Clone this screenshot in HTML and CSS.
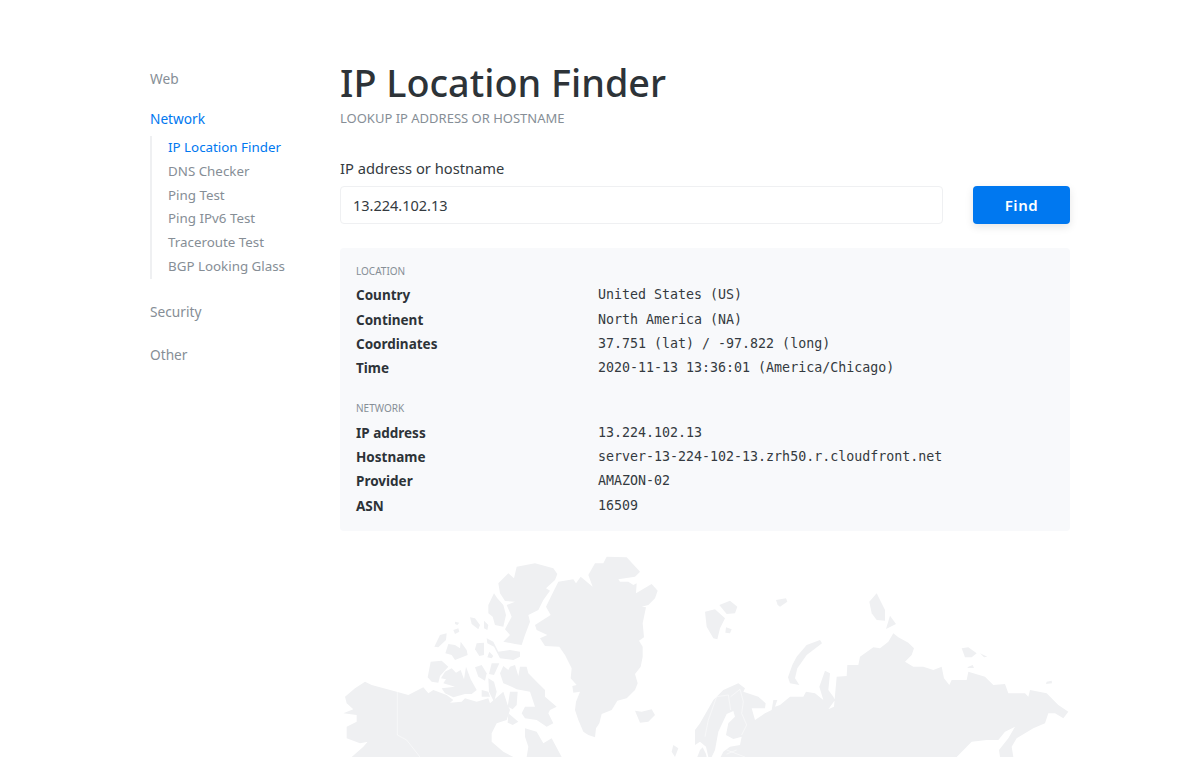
FILE: index.html
```html
<!DOCTYPE html>
<html lang="en">
<head>
<meta charset="utf-8">
<title>IP Location Finder</title>
<link rel="stylesheet" href="styles.css">
</head>
<body>
<div class="layout">
  <nav class="sidebar">
    <a class="nav-top" href="#">Web</a>
    <a class="nav-top active" href="#">Network</a>
    <ul class="subnav">
      <li><a class="active" href="#">IP Location Finder</a></li>
      <li><a href="#">DNS Checker</a></li>
      <li><a href="#">Ping Test</a></li>
      <li><a href="#">Ping IPv6 Test</a></li>
      <li><a href="#">Traceroute Test</a></li>
      <li><a href="#">BGP Looking Glass</a></li>
    </ul>
    <a class="nav-top" href="#">Security</a>
    <a class="nav-top" href="#">Other</a>
  </nav>
  <main class="content">
    <h1 class="title">IP Location Finder</h1>
    <p class="subtitle">Lookup IP address or hostname</p>
    <label class="field-label" for="host">IP address or hostname</label>
    <div class="form-row">
      <input class="field" id="host" type="text" value="13.224.102.13">
      <button class="find" type="button">Find</button>
    </div>
    <section class="results">
      <h2 class="group-title">Location</h2>
      <dl class="rows">
        <dt>Country</dt><dd>United States (US)</dd>
        <dt>Continent</dt><dd>North America (NA)</dd>
        <dt>Coordinates</dt><dd>37.751 (lat) / -97.822 (long)</dd>
        <dt>Time</dt><dd>2020-11-13 13:36:01 (America/Chicago)</dd>
      </dl>
      <h2 class="group-title second">Network</h2>
      <dl class="rows">
        <dt>IP address</dt><dd>13.224.102.13</dd>
        <dt>Hostname</dt><dd>server-13-224-102-13.zrh50.r.cloudfront.net</dd>
        <dt>Provider</dt><dd>AMAZON-02</dd>
        <dt>ASN</dt><dd>16509</dd>
      </dl>
    </section>
    <svg class="map" viewBox="0 0 2190 621" aria-hidden="true">
      <g class="land">
        <path d="M745,75 L765,40 L790,40 L800,20 L860,22 L900,65 L885,80 L835,88 L840,95 L865,95 L880,105 L890,100 L888,130 L935,102 L953,122 L945,145 L925,165 L905,170 L918,172 L908,220 L912,262 L897,272 L908,290 L908,320 L902,350 L885,372 L893,400 L885,420 L860,445 L832,452 L815,480 L785,492 L778,520 L768,535 L765,562 L745,555 L730,545 L715,510 L705,480 L708,455 L720,425 L700,428 L697,408 L710,405 L692,385 L695,355 L675,315 L658,290 L615,288 L600,265 L622,255 L590,240 L585,225 L632,195 L618,170 L640,125 L655,95 L700,88 L708,100 L722,80 L758,110 Z"/>
        <path d="M475,100 L505,70 L522,85 L530,50 L585,40 L640,55 L652,72 L645,90 L618,115 L630,122 L610,150 L595,180 L565,195 L570,215 L555,255 L545,285 L525,282 L490,275 L510,255 L495,238 L515,200 L500,165 L525,155 L495,153 L480,130 Z"/>
        <path d="M445,165 L462,130 L472,145 L490,165 L498,195 L490,230 L465,225 L458,200 L445,190 Z"/>
        <path d="M390,202 L405,205 L420,225 L415,238 L395,222 Z"/>
        <path d="M432,212 L445,225 L442,240 L432,235 Z"/>
        <path d="M345,215 L358,218 L352,225 L345,222 Z"/>
        <path d="M340,240 L355,235 L358,245 L345,252 Z"/>
        <path d="M300,255 L320,250 L318,270 L295,292 L283,290 Z"/>
        <path d="M440,265 L460,275 L475,305 L510,300 L540,305 L540,320 L520,330 L480,325 L462,290 L442,280 Z"/>
        <path d="M325,282 L345,285 L360,295 L362,275 L380,300 L383,315 L345,330 L335,315 L316,310 Z"/>
        <path d="M410,280 L432,278 L432,315 L418,318 L405,298 Z"/>
        <path d="M448,305 L460,318 L455,325 L442,322 Z"/>
        <path d="M272,335 L305,332 L325,350 L300,378 L295,398 L275,395 L263,382 Z"/>
        <path d="M335,355 L348,368 L362,360 L372,388 L378,350 L392,388 L410,420 L395,432 L375,432 L340,442 L315,430 L305,415 L345,410 L310,400 L318,388 L303,385 L315,365 Z"/>
        <path d="M405,352 L425,345 L440,370 L435,392 L415,380 Z"/>
        <path d="M455,340 L478,340 L462,375 L447,372 Z"/>
        <path d="M445,385 L462,395 L470,425 L462,455 L447,425 Z"/>
        <path d="M425,420 L445,425 L450,440 L425,440 Z"/>
        <path d="M480,370 L490,348 L505,360 L510,350 L525,345 L535,378 L540,350 L560,350 L565,370 L590,395 L615,420 L615,440 L650,470 L630,480 L625,490 L640,520 L620,530 L590,510 L555,505 L545,490 L555,470 L585,470 L570,425 L530,418 L515,410 L490,400 Z"/>
        <path d="M510,425 L533,425 L530,465 L518,478 L503,470 Z"/>
        <path d="M505,490 L535,515 L518,525 L503,518 Z"/>
        <path d="M15,440 L45,415 L75,395 L95,405 L170,425 L205,435 L250,412 L265,430 L280,420 L320,435 L340,450 L330,458 L365,455 L375,445 L410,455 L445,445 L450,460 L490,425 L503,465 L510,480 L500,510 L470,520 L455,550 L455,575 L490,605 L520,621 L560,621 L565,590 L555,560 L555,535 L590,545 L610,580 L635,565 L665,621 L35,621 L70,590 L105,550 L115,555 L130,550 L100,572 L60,580 L20,565 L20,530 L50,515 L50,495 L10,490 L40,478 L20,460 Z"/>
        <path d="M885,482 L905,485 L935,478 L945,495 L925,515 L900,518 Z"/>
        <path d="M1000,585 L1015,595 L1005,621 L995,605 Z"/>
      </g>
      <g class="land shift">
        <path d="M15,185 L45,178 L75,205 L60,235 L52,268 L40,265 L20,230 Z"/>
        <path d="M58,165 L90,152 L112,170 L105,190 L80,192 Z"/>
        <path d="M78,232 L95,238 L90,250 L76,248 Z"/>
        <path d="M228,150 L258,145 L262,155 L240,170 L233,165 Z"/>
        <path d="M508,155 L530,130 L555,180 L555,212 L530,210 L515,190 Z"/>
        <path d="M570,197 L588,222 L558,237 Z"/>
        <path d="M290,320 L320,285 L360,270 L366,280 L320,315 L292,355 L285,385 L298,405 L270,400 L264,382 L277,345 Z"/>
        <path d="M785,295 L805,292 L830,310 L815,322 L795,322 Z"/>
        <path d="M840,310 L862,320 L852,322 Z"/>
        <path d="M805,350 L818,345 L822,354 L802,354 Z"/>
        <path d="M1040,395 L1055,392 L1056,400 L1038,402 Z"/>
        <path d="M-15,585 L-15,540 L0,520 L40,450 L70,420 L115,400 L135,415 L130,425 L175,440 L197,460 L195,475 L155,475 L165,510 L195,490 L215,480 L220,450 L232,450 L225,470 L240,465 L270,440 L310,440 L318,425 L345,430 L370,450 L358,410 L375,362 L390,370 L385,420 L400,440 L405,450 L385,478 L402,470 L410,380 L440,378 L442,345 L475,345 L480,320 L520,292 L540,295 L565,275 L580,250 L595,262 L625,278 L642,295 L635,315 L615,335 L640,350 L670,350 L700,360 L725,350 L732,385 L748,405 L755,390 L800,390 L805,365 L855,380 L880,405 L915,402 L925,430 L975,430 L985,440 L990,420 L1040,430 L1075,465 L1105,485 L1090,505 L1065,490 L1045,490 L1035,520 L1000,535 L950,565 L935,590 L940,621 L900,621 L897,600 L925,565 L945,530 L915,545 L895,570 L860,570 L815,575 L770,621 L25,621 L18,590 L0,575 Z"/>
        <path d="M0,600 L8,592 L18,612 L20,621 L-8,621 Z"/>
        <path class="gap" d="M45,600 L55,545 L80,492 L100,483 L105,500 L85,520 L78,555 L100,567 L125,560 L120,585 L90,590 L70,605 L62,621 L35,621 Z"/>
        <path class="border" d="M15,560 L25,510 L50,440 L85,435 L92,480 M92,440 L120,418 L130,455 L125,490 L140,525 L125,555 M80,600 L135,621 M80,612 L110,600"/>
      </g>
      <path class="border" d="M172,425 L172,555 L200,570 L240,621"/>
    </svg>
  </main>
</div>
</body>
</html>
```
FILE: styles.css
```css
* { box-sizing: border-box; }
html, body { margin: 0; height: 757px; overflow: hidden; background: #fff; }
body { font-family: "Noto Sans", "Open Sans", sans-serif; color: #343a40; }
.layout { display: flex; padding: 60px 0 0 150px; }
.sidebar { width: 190px; flex: none; display: flex; flex-direction: column; align-items: flex-start; padding-top: 9px; font-size: 13.7px; }
.sidebar a { text-decoration: none; color: #868e96; }
.sidebar a.active { color: #0078f0; }
.nav-top { line-height: 20px; margin-bottom: 23px; }
.nav-top:first-child { margin-bottom: 20px; }
.nav-top.active { margin-bottom: 7px; }
.subnav { list-style: none; margin: 0 0 23px; padding: 0 0 0 16px; border-left: 2px solid #eff0f2; }
.subnav li { height: 23.8px; line-height: 23.8px; font-size: 13.35px; white-space: nowrap; }
.content { width: 730px; flex: none; }
.title { margin: 0; font-size: 37.8px; font-weight: 500; line-height: 46px; color: #2d3338; }
.subtitle { margin: 1px 0 0; font-size: 13px; line-height: 22px; text-transform: uppercase; color: #868e96; }
.field-label { display: block; margin-top: 28px; font-size: 14.7px; line-height: 22px; color: #343a40; }
.form-row { display: flex; gap: 30px; margin-top: 7px; }
.field { flex: 1; height: 38px; min-width: 0; padding: 0 12px; border: 1px solid #eff0f2; border-radius: 4px; font: 14.5px "Noto Sans", sans-serif; color: #343a40; background: #fff; }
.find { width: 97px; height: 38px; border: 0; border-radius: 4px; background: #0078f0; color: #fff; font: 600 15px "Noto Sans", sans-serif; letter-spacing: .6px; box-shadow: 0 3px 8px rgba(0,0,0,.1); }
.results { margin-top: 24px; height: 283px; padding: 16px; border-radius: 4px; background: #f8f9fb; }
.group-title { margin: 0; font-size: 10px; font-weight: 400; line-height: 14px; text-transform: uppercase; color: #868e96; }
.group-title.second { margin-top: 20.6px; }
.rows { display: grid; grid-template-columns: 242px 1fr; grid-auto-rows: 24.33px; margin: 5.33px 0 0; font-size: 13.5px; line-height: 24.33px; }
.second + .rows { margin-top: 5.52px; }
.rows dt { font-weight: 700; color: #2d3338; }
.rows dd { margin: 0; font-family: "DejaVu Sans Mono", "Liberation Mono", monospace; font-size: 13.3px; line-height: 23px; color: #343a40; white-space: nowrap; }
.map { display: block; width: 730px; height: 207px; margin-top: 19px; }
.land { fill: #eff0f2; }
.shift { transform: translateX(1080px); }
.gap { fill: #fff; }
.border { fill: none; stroke: #fff; stroke-width: 1.5; }
```
